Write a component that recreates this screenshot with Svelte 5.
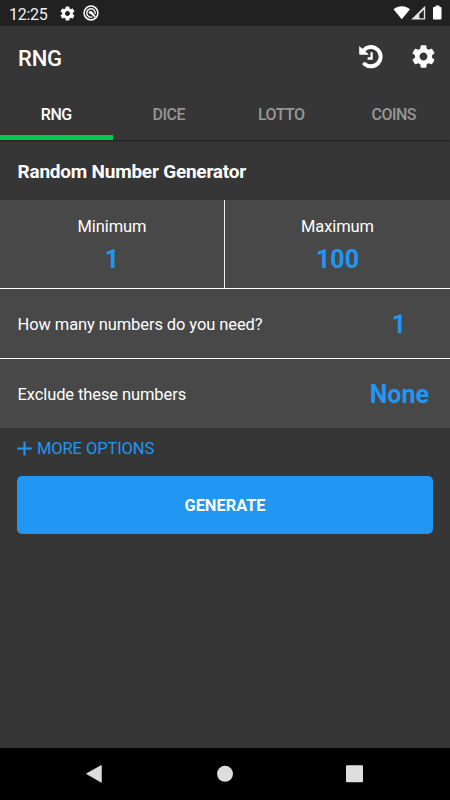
<script>
  const tabs = ["RNG", "DICE", "LOTTO", "COINS"];
  const gear =
    "M19.43 12.98c.04-.32.07-.64.07-.98s-.03-.66-.07-.98l2.11-1.65c.19-.15.24-.42.12-.64l-2-3.46c-.12-.22-.39-.3-.61-.22l-2.49 1c-.52-.4-1.08-.73-1.69-.98l-.38-2.65C14.46 2.18 14.25 2 14 2h-4c-.25 0-.46.18-.49.42l-.38 2.65c-.61.25-1.17.59-1.69.98l-2.49-1c-.23-.09-.49 0-.61.22l-2 3.46c-.13.22-.07.49.12.64l2.11 1.65c-.04.32-.07.65-.07.98s.03.66.07.98l-2.11 1.65c-.19.15-.24.42-.12.64l2 3.46c.12.22.39.3.61.22l2.49-1c.52.4 1.08.73 1.69.98l.38 2.65c.03.24.24.42.49.42h4c.25 0 .46-.18.49-.42l.38-2.65c.61-.25 1.17-.59 1.69-.98l2.49 1c.23.09.49 0 .61-.22l2-3.46c.12-.22.07-.49-.12-.64l-2.11-1.65zM12 15.5c-1.93 0-3.5-1.57-3.5-3.5s1.57-3.5 3.5-3.5 3.5 1.57 3.5 3.5-1.57 3.5-3.5 3.5z";

  let active = $state("RNG");
  let min = $state(1);
  let max = $state(100);
  let count = $state(1);
  let excluded = $state([]);
</script>

<div class="phone">
  <div class="status">
    <span class="time">12:25</span>
    <svg class="status-gear" viewBox="0 0 24 24"><path d={gear} /></svg>
    <svg class="status-app" viewBox="0 0 16 16">
      <circle cx="8" cy="8" r="6.9" fill="none" stroke="#fff" stroke-width="1.5" />
      <path
        d="M9.4 11.9A4.200 4.200 0 1 1 12.100 8.800"
        fill="none"
        stroke="#fff"
        stroke-width="1.4"
      />
      <path d="M5.500 7Q7.200 5.600 9 6.400L12.800 11.400 11.600 12.600 8.200 9.200Q6.200 9.200 5.500 7z" />
    </svg>
    <svg class="signals" viewBox="0 0 50 16">
      <path d="M.5 4.2C5.3.2 12.2.2 17 4.2L8.75 14.3z" />
      <path d="M32.2.8V14.6H18.2z" fill="#e4e4e4" />
      <path d="M30.8 4.8V13.2H26.400V9.2z" fill="#212121" />
      <path d="M42.5.5h4v1.4h1.2q.8 0 .8.8v11q0 .8-.8.8h-6.900q-.8 0-.8-.8v-11q0-.8.8-.8h1.700z" />
    </svg>
  </div>

  <header>
    <div class="toolbar">
      <h1>RNG</h1>
      <button class="icon" aria-label="History">
        <svg class="history" viewBox="0 0 24 24">
          <path
            d="M5 4.900A9.700 9.700 0 1 1 5.600 19"
            fill="none"
            stroke="#fff"
            stroke-width="4"
            stroke-linecap="round"
          />
          <path d="M.2 1L9.300 9Q9.700 9.800 8.800 9.800H1Q.2 9.800 .2 9z" />
          <path d="M12.600 7.200v6.300H8.600" fill="none" stroke="#fff" stroke-width="2.300" />
        </svg>
      </button>
      <button class="icon" aria-label="Settings">
        <svg class="settings" viewBox="0 0 24 24"><path d={gear} /></svg>
      </button>
    </div>
    <nav class="tabs">
      {#each tabs as tab}
        <button class="tab" class:active={active === tab} onclick={() => (active = tab)}>
          {tab}
        </button>
      {/each}
    </nav>
  </header>

  <main>
    <h2>Random Number Generator</h2>
    <div class="range">
      <div class="cell">
        <span>Minimum</span>
        <strong>{min}</strong>
      </div>
      <div class="cell">
        <span>Maximum</span>
        <strong>{max}</strong>
      </div>
    </div>
    <div class="row">
      <span>How many numbers do you need?</span>
      <strong class="count">{count}</strong>
    </div>
    <div class="row last">
      <span>Exclude these numbers</span>
      <strong>{excluded.length ? excluded.join(", ") : "None"}</strong>
    </div>
    <button class="more">
      <svg viewBox="0 0 15 15"><path d="M7.500.5v14M.2 7.500h14.600" stroke="#2196f3" stroke-width="2" /></svg>
      <span>MORE OPTIONS</span>
    </button>
    <button class="generate">GENERATE</button>
  </main>

  <footer>
    <svg viewBox="0 0 450 52">
      <path d="M86.500 25.700L101.300 17.500V34.300z" stroke="#dedede" stroke-width=".8" stroke-linejoin="round" />
      <circle cx="225" cy="25.800" r="8" />
      <rect x="346" y="17.300" width="17" height="17" rx="1" />
    </svg>
  </footer>
</div>

<style>
  :global(body) {
    margin: 0;
    background: #363636;
  }

  .phone {
    display: flex;
    flex-direction: column;
    height: 800px;
    background: #363636;
    color: #fff;
    font-family: Roboto, sans-serif;
    overflow: hidden;
  }

  svg {
    display: block;
    fill: #fff;
    flex: none;
  }

  button {
    border: none;
    padding: 0;
    background: none;
    color: inherit;
    font-family: inherit;
    cursor: pointer;
  }

  .status {
    display: flex;
    align-items: center;
    height: 26px;
    padding: 0 7px 0 9px;
    background: #212121;
    flex: none;
  }

  .time {
    width: 50px;
    padding-top: 3px;
    font-size: 16px;
    letter-spacing: -0.3px;
    line-height: 24px;
    color: #f0f0f0;
  }

  .status-gear {
    width: 17px;
    height: 17px;
  }

  .status-app {
    width: 16px;
    height: 16px;
    margin-left: 7px;
  }

  .signals {
    width: 50px;
    height: 16px;
    margin-left: auto;
  }

  header {
    height: 114px;
    flex: none;
    box-shadow: 0 1px 2px rgba(0, 0, 0, 0.4);
  }

  .toolbar {
    display: flex;
    align-items: center;
    height: 61px;
    padding: 0 13px 0 18px;
  }

  h1 {
    flex: 1;
    margin: 0;
    padding-top: 3px;
    font-size: 22px;
    font-weight: 500;
    letter-spacing: -0.2px;
  }

  .history {
    width: 24px;
    height: 24px;
    margin-right: 27px;
  }

  .settings {
    width: 27px;
    height: 27px;
  }

  .tabs {
    display: grid;
    grid-template-columns: repeat(4, 1fr);
  }

  .tab {
    height: 53px;
    padding-top: 6px;
    border-bottom: 5px solid transparent;
    font-size: 16px;
    font-weight: 500;
    letter-spacing: -0.5px;
    color: #969696;
  }

  .tab.active {
    color: #fff;
    border-color: #00c853;
  }

  main {
    flex: 1;
  }

  h2 {
    margin: 0;
    padding: 3px 17.5px 0;
    font-size: 19px;
    font-weight: 700;
    letter-spacing: -0.22px;
    line-height: 57px;
  }

  .range {
    display: grid;
    grid-template-columns: 1fr 1fr;
    height: 88px;
    background: #484848;
    border-bottom: 1px solid #fff;
  }

  .cell {
    display: flex;
    flex-direction: column;
    align-items: center;
    padding-top: 16px;
    font-size: 16.5px;
    letter-spacing: -0.1px;
    line-height: 22px;
  }

  .cell:first-child {
    border-right: 1px solid #eee;
  }

  strong {
    color: #2196f3;
    font-size: 25px;
    font-weight: 700;
    letter-spacing: 0;
  }

  .cell strong {
    line-height: 44px;
  }

  .row {
    display: flex;
    align-items: center;
    justify-content: space-between;
    height: 69px;
    padding: 0 21px 0 17.5px;
    background: #484848;
    border-bottom: 1px solid #fff;
    font-size: 16.5px;
    letter-spacing: -0.1px;
  }

  .row span {
    padding-top: 2px;
  }

  .row strong {
    padding-top: 2px;
  }

  .last {
    border: none;
  }

  .count {
    width: 60px;
    text-align: center;
  }

  .more {
    display: flex;
    align-items: center;
    gap: 5px;
    height: 48px;
    padding: 0 0 8px 17px;
    color: #2196f3;
    font-size: 16.5px;
    letter-spacing: -0.1px;
  }

  .more svg {
    width: 15px;
    height: 15px;
  }

  .generate {
    display: block;
    width: 416px;
    height: 58px;
    margin: 0 auto;
    border-radius: 5px;
    background: #2196f3;
    font-size: 16.4px;
    font-weight: 700;
  }

  footer {
    height: 52px;
    flex: none;
    background: #000;
  }

  footer svg {
    width: 450px;
    height: 52px;
    fill: #dedede;
  }
</style>
